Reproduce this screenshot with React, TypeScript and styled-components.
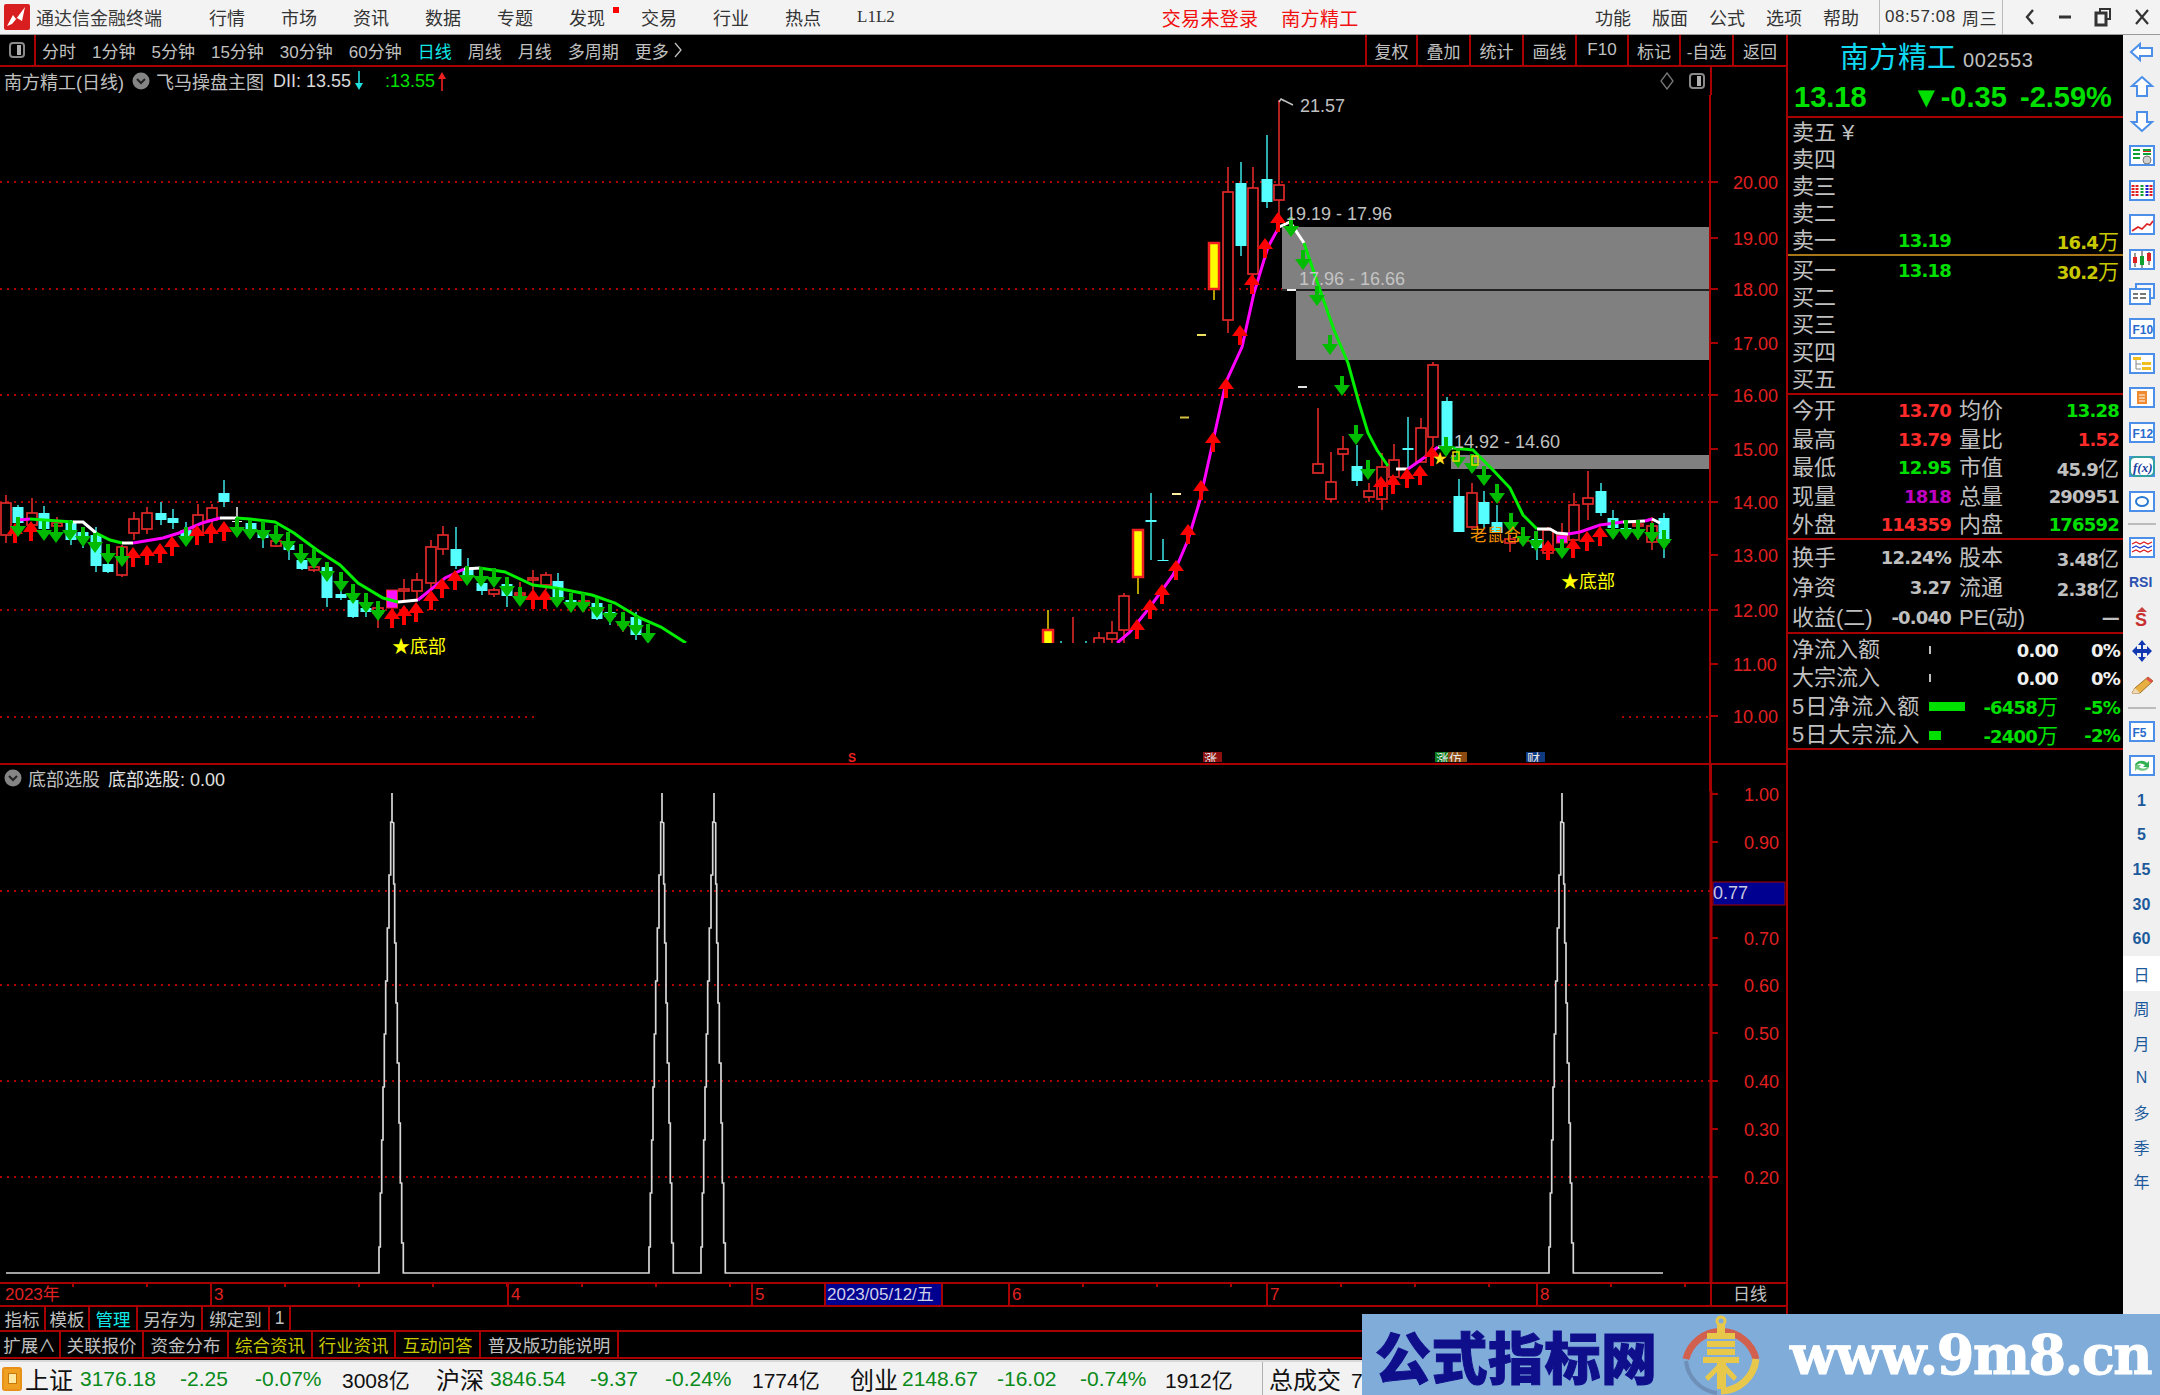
import React from "react";
import styled, { createGlobalStyle } from "styled-components";

const GlobalStyle = createGlobalStyle`
  html, body { margin: 0; padding: 0; background: #000; }
  * { box-sizing: border-box; }
`;

const FONT = `"Liberation Sans", "Noto Sans CJK SC", sans-serif`;
const RED = "#a80000";
const GRAY = "#c0c0c0";
const GREEN = "#00e000";
const TXTRED = "#ff2a2a";

const Page = styled.div`
  position: relative;
  width: 2160px;
  height: 1395px;
  overflow: hidden;
  background: #000;
  font-family: ${FONT};
  display: flex;
  flex-direction: column;
`;

/* title bar */
const TitleBar = styled.div`
  height: 35px;
  flex: none;
  display: flex;
  align-items: center;
  background: #f3f3f3;
  border-bottom: 1px solid #9a9a9a;
  color: #333;
  font-size: 18px;
`;
const AppName = styled.div`
  margin-left: 6px;
  margin-right: 47px;
  color: #3a3a3a;
`;
const MenuItem = styled.div`
  position: relative;
  width: 72px;
`;
const NewDot = styled.span`
  position: absolute;
  left: 44px;
  top: 3px;
  width: 6px;
  height: 6px;
  background: #f00;
`;
const SmallMenu = styled.div`
  font-family: "Liberation Serif", serif;
  font-size: 17px;
  margin-right: 267px;
`;
const Notice = styled.div`
  color: #f01010;
  font-size: 19px;
  letter-spacing: 0.3px;
  margin-right: 23px;
`;
const RightMenu = styled.div`
  margin-left: auto;
  display: flex;
  align-items: center;
  height: 100%;
`;
const RightItem = styled.div`
  width: 57px;
`;
const Clock = styled.div`
  width: 124px;
  height: 100%;
  margin-left: -1px;
  display: flex;
  align-items: center;
  justify-content: center;
  gap: 6px;
  border-left: 1px solid #bbb;
  border-right: 1px solid #bbb;
  font-size: 17px;
  letter-spacing: 0.6px;
`;
const WinButtons = styled.div`
  width: 157px;
  display: flex;
  align-items: center;
  gap: 22px;
  padding-left: 21px;
`;

/* body */
const Middle = styled.div`
  flex: none;
  height: 1325px;
  display: flex;
`;
const LeftColumn = styled.div`
  width: 1788px;
  flex: none;
  display: flex;
  flex-direction: column;
  border-right: 2px solid ${RED};
`;

const PeriodBar = styled.div`
  height: 32px;
  flex: none;
  display: flex;
  align-items: center;
  border-bottom: 2px solid ${RED};
  color: ${GRAY};
  font-size: 17px;
`;
const ToggleCell = styled.div`
  width: 36px;
  height: 100%;
  display: flex;
  align-items: center;
  justify-content: center;
  border-right: 2px solid ${RED};
  margin-right: 6px;
`;
const PeriodTab = styled.div<{ $on?: boolean }>`
  display: flex;
  align-items: center;
  gap: 5px;
  margin-right: 16px;
  white-space: nowrap;
  color: ${(p) => (p.$on ? "#10e8e8" : GRAY)};
`;
const BarTools = styled.div`
  margin-left: auto;
  display: flex;
  height: 100%;
`;
const BarTool = styled.div<{ $w: number }>`
  width: ${(p) => p.$w}px;
  display: flex;
  align-items: center;
  justify-content: center;
  border-left: 2px solid ${RED};
  font-size: 17px;
`;

const PaneHeader = styled.div<{ $h: number; $axis: number }>`
  height: ${(p) => p.$h}px;
  width: 1712px;
  flex: none;
  display: flex;
  align-items: center;
  padding-left: 4px;
  border-right: ${(p) => p.$axis}px solid ${RED};
  font-size: 18px;
  color: ${GRAY};
  white-space: nowrap;
`;
const HeadText = styled.span<{ $c?: string; $ml?: number }>`
  color: ${(p) => p.$c || GRAY};
  margin-left: ${(p) => p.$ml || 0}px;
`;
const HeadRight = styled.div`
  margin-left: auto;
  margin-right: 5px;
  display: flex;
  align-items: center;
  gap: 14px;
`;
const ChartSvg = styled.svg`
  display: block;
  flex: none;
  overflow: visible;
  font-family: ${FONT};
`;

const TimeAxis = styled.div`
  height: 25px;
  flex: none;
  display: flex;
  border-top: 2px solid ${RED};
  border-bottom: 2px solid ${RED};
  color: #e02020;
  font-size: 17px;
`;
const TimeCell = styled.div<{ $w: number; $date?: boolean; $end?: boolean }>`
  width: ${(p) => p.$w}px;
  flex: none;
  padding-left: ${(p) => (p.$date ? 1 : p.$w === 210 ? 5 : 2)}px;
  line-height: 21px;
  border-left: ${(p) => (p.$w === 210 ? "none" : `2px solid ${RED}`)};
  background: ${(p) =>
    p.$date
      ? "#000090"
      : p.$end
      ? "none"
      : `repeating-linear-gradient(90deg, transparent 0 72px, ${RED} 72px 74px) top / 100% 3px no-repeat`};
  color: ${(p) => (p.$date ? "#d0d0e8" : p.$end ? GRAY : "#e02020")};
  text-align: ${(p) => (p.$end ? "center" : "left")};
`;
const ToolRow = styled.div<{ $h: number }>`
  height: ${(p) => p.$h}px;
  flex: none;
  display: flex;
  border-bottom: 2px solid ${RED};
  font-size: 17.5px;
`;
const ToolCell = styled.div<{ $w: number; $c?: string }>`
  width: ${(p) => p.$w}px;
  flex: none;
  display: flex;
  align-items: center;
  justify-content: center;
  border-right: 2px solid ${RED};
  color: ${(p) => p.$c || GRAY};
  white-space: nowrap;
`;

/* quote panel */
const InfoPanel = styled.div`
  width: 335px;
  flex: none;
  background: #000;
  color: ${GRAY};
`;
const NameRow = styled.div`
  height: 43px;
  display: flex;
  align-items: flex-end;
  padding-left: 52px;
  padding-bottom: 2px;
`;
const StockName = styled.div`
  color: #10d8f0;
  font-size: 29px;
  line-height: 36px;
`;
const StockCode = styled.div`
  margin-left: 7px;
  font-size: 20px;
  line-height: 32px;
  letter-spacing: 0.6px;
`;
const PriceRow = styled.div`
  height: 40px;
  display: flex;
  align-items: center;
  padding-left: 6px;
  border-bottom: 2px solid ${RED};
  color: ${GREEN};
  font-size: 29px;
  font-weight: bold;
`;
const PriceCell = styled.div<{ $w: number }>`
  width: ${(p) => p.$w}px;
  white-space: nowrap;
`;
const Section = styled.div<{ $line?: string; $pt?: number }>`
  padding-top: ${(p) => p.$pt || 0}px;
  border-bottom: 2px solid ${(p) => p.$line || RED};
`;
const Row = styled.div<{ $h: number }>`
  height: ${(p) => p.$h}px;
  display: grid;
  grid-template-columns: 159px 8px 160px;
  align-items: center;
  padding-left: 4px;
  padding-top: 2px;
  font-size: 22px;
  line-height: 1;
  white-space: nowrap;
`;
const Pair = styled.div`
  display: flex;
  justify-content: space-between;
  align-items: center;
`;
const Num = styled.span<{ $c?: string }>`
  font-family: "DejaVu Sans", sans-serif;
  font-weight: bold;
  font-size: 18px;
  letter-spacing: -0.8px;
  color: ${(p) => p.$c || GRAY};
`;
const Unit = styled.span`
  font-family: "Noto Sans CJK SC", sans-serif;
  font-weight: normal;
  font-size: 21px;
  letter-spacing: 0;
`;
const FlowRow = styled.div`
  height: 28.5px;
  display: grid;
  grid-template-columns: 137px 50px 79px 62px;
  align-items: center;
  padding-left: 4px;
  padding-top: 2px;
  font-size: 22px;
  line-height: 1;
  white-space: nowrap;
`;
const FlowLabel = styled.span<{ $wide?: boolean }>`
  letter-spacing: ${(p) => (p.$wide ? 1 : 0)}px;
`;
const FlowBar = styled.div<{ $w: number }>`
  height: ${(p) => (p.$w > 2 ? 9 : 8)}px;
  width: ${(p) => p.$w}px;
  background: ${(p) => (p.$w > 2 ? GREEN : "#c0c0c0")};
`;
const RightText = styled.div`
  text-align: right;
`;

/* right tool strip */
const SideBar = styled.div`
  width: 37px;
  flex: none;
  height: 1360px;
  margin-bottom: -35px;
  background: #f0f0f0;
  display: flex;
  flex-direction: column;
  align-items: center;
  z-index: 1;
`;
const SideItem = styled.div<{ $on?: boolean }>`
  flex: none;
  width: 100%;
  height: 34.6px;
  display: flex;
  align-items: center;
  justify-content: center;
  background: ${(p) => (p.$on ? "#fff" : "none")};
  color: #1c5a9c;
  font-size: 16px;
  font-weight: bold;
`;
const SideCjk = styled(SideItem)`
  font-weight: normal;
`;
const SideSep = styled.div`
  flex: none;
  width: 28px;
  height: 2px;
  margin: 4px 0 5px;
  background: #bcbcbc;
`;

/* status bar */
const StatusBar = styled.div`
  height: 35px;
  flex: none;
  display: flex;
  align-items: center;
  background: #f2f2f2;
  border-top: 2px solid #d8d8d8;
  font-size: 21px;
  color: #222;
  white-space: nowrap;
`;
const StatusIcon = styled.div`
  width: 20px;
  height: 24px;
  margin: 0 3px 0 2px;
  border-radius: 3px;
  background: #f0a020;
  border: 2px solid #e89018;
  display: flex;
  align-items: center;
  justify-content: center;
`;
const StatusIconInner = styled.div`
  width: 9px;
  height: 11px;
  background: #ffe9a0;
  border: 1px solid #c87808;
`;
const StatusItem = styled.span<{ $w: number; $c?: string; $big?: boolean }>`
  display: inline-block;
  width: ${(p) => p.$w}px;
  flex: none;
  color: ${(p) => p.$c || "#111"};
  font-size: ${(p) => (p.$big ? 24 : 21)}px;
`;
const StatusSep = styled.div`
  width: 1px;
  height: 100%;
  margin: 0 6px 0 0;
  background: #b0b0b0;
`;

/* site banner over the bottom right corner */
const Watermark = styled.div`
  position: absolute;
  left: 1362px;
  top: 1314px;
  width: 798px;
  height: 81px;
  z-index: 3;
  background: #80acd9;
  display: flex;
  align-items: center;
`;
const MarkTitle = styled.div`
  flex: none;
  margin-left: 13px;
  width: 300px;
  color: #0f0f8c;
  font-family: "Noto Sans CJK SC", sans-serif;
  font-weight: 900;
  font-size: 56px;
  letter-spacing: 0.5px;
  -webkit-text-stroke: 1px #0f0f8c;
  white-space: nowrap;
`;
const MarkSite = styled.div`
  flex: none;
  margin-left: 29px;
  color: #fff;
  font-family: "DejaVu Serif", serif;
  font-weight: bold;
  font-size: 54px;
  letter-spacing: -1.5px;
  white-space: nowrap;
  -webkit-text-stroke: 1px #fff;
`;

/* --------- chart data, in page pixels --------- */

type Candle = [number, number, number, number, number, string];

const candles: Candle[] = [
  [6, 495, 503, 535, 543, "r"], [18, 505, 507, 523, 530, "c"], [32, 498, 513, 525, 535, "r"],
  [44, 506, 513, 529, 535, "c"], [57, 517, 523, 526, 533, "r"], [71, 520, 523, 540, 545, "c"],
  [83, 528, 532, 536, 548, "c"], [96, 527, 535, 566, 572, "c"], [108, 550, 564, 572, 573, "c"],
  [122, 545, 547, 575, 577, "r"], [134, 512, 519, 533, 540, "r"], [147, 507, 513, 529, 534, "r"],
  [161, 502, 513, 520, 525, "c"], [173, 509, 518, 523, 529, "c"], [186, 522, 530, 538, 545, "c"],
  [198, 504, 515, 535, 544, "r"], [212, 504, 508, 520, 528, "r"], [224, 480, 493, 502, 507, "c"],
  [237, 507, 521, 522, 523, "w"], [251, 520, 523, 532, 538, "c"], [263, 530, 532, 538, 548, "c"],
  [276, 538, 541, 546, 547, "r"], [289, 540, 545, 550, 560, "c"], [302, 555, 560, 569, 570, "c"],
  [314, 560, 567, 570, 572, "r"], [327, 565, 567, 598, 607, "c"], [341, 585, 594, 598, 600, "c"],
  [353, 595, 600, 617, 618, "c"], [366, 600, 608, 612, 617, "c"], [378, 605, 608, 613, 628, "r"],
  [392, 590, 590, 608, 608, "m"], [404, 579, 589, 591, 600, "r"], [417, 573, 580, 591, 600, "r"],
  [431, 540, 547, 583, 590, "r"], [443, 526, 535, 549, 555, "r"], [456, 527, 549, 566, 569, "c"],
  [468, 558, 569, 577, 583, "c"], [482, 575, 583, 591, 595, "c"], [494, 588, 590, 594, 597, "r"],
  [507, 580, 584, 596, 607, "c"], [520, 582, 593, 595, 605, "r"], [533, 570, 578, 580, 590, "r"],
  [546, 572, 575, 585, 590, "r"], [558, 573, 581, 600, 605, "c"], [571, 596, 600, 604, 612, "c"],
  [584, 598, 601, 605, 612, "r"], [597, 600, 603, 619, 620, "c"], [610, 608, 612, 617, 625, "c"],
  [623, 615, 622, 625, 632, "r"], [636, 612, 617, 635, 640, "c"],
  [1048, 610, 630, 650, 650, "y"], [1061, 641, 650, 650, 650, "c"], [1073, 617, 650, 650, 650, "r"],
  [1086, 641, 650, 650, 650, "c"], [1099, 632, 638, 650, 650, "r"],
  [1112, 621, 633, 639, 650, "r"], [1124, 593, 596, 630, 650, "r"], [1138, 530, 530, 577, 594, "y"],
  [1151, 493, 520, 522, 560, "c"], [1163, 539, 560, 561, 561, "c"], [1214, 243, 243, 289, 300, "y"],
  [1228, 167, 192, 320, 333, "r"], [1241, 162, 183, 246, 256, "c"], [1253, 167, 188, 274, 290, "r"],
  [1267, 135, 179, 202, 208, "c"], [1279, 100, 185, 200, 228, "r"], [1318, 408, 464, 473, 473, "r"],
  [1331, 452, 482, 499, 502, "r"], [1343, 436, 449, 454, 471, "r"], [1357, 445, 466, 481, 486, "c"],
  [1369, 483, 491, 497, 502, "r"], [1382, 453, 467, 499, 510, "r"], [1394, 444, 460, 477, 477, "r"],
  [1408, 417, 448, 450, 468, "c"], [1421, 418, 428, 462, 462, "r"], [1433, 362, 365, 437, 447, "r"],
  [1447, 397, 401, 447, 455, "c"], [1459, 479, 496, 532, 532, "c"], [1472, 483, 493, 527, 530, "r"],
  [1484, 491, 502, 524, 528, "c"], [1497, 505, 522, 533, 533, "c"], [1510, 535, 539, 543, 552, "r"],
  [1523, 527, 540, 541, 545, "r"], [1537, 535, 539, 548, 560, "c"], [1548, 527, 530, 553, 557, "r"],
  [1562, 523, 535, 543, 545, "m"], [1574, 493, 505, 540, 555, "r"], [1588, 471, 498, 504, 520, "r"],
  [1601, 483, 491, 513, 516, "c"], [1613, 510, 518, 528, 530, "c"], [1626, 525, 528, 532, 535, "c"],
  [1638, 521, 524, 526, 540, "r"], [1652, 517, 526, 542, 550, "r"], [1664, 513, 518, 543, 558, "c"],
];

const upArrows = [
  [15, 523], [31, 521], [133, 547], [147, 545], [160, 543], [172, 536], [197, 525], [211, 523], [224, 521],
  [392, 608], [404, 605], [416, 602], [431, 590], [442, 578], [455, 570], [533, 589], [545, 589],
  [1137, 619], [1150, 599], [1162, 584], [1176, 560], [1188, 524], [1201, 480], [1213, 432], [1226, 378],
  [1240, 325], [1252, 274], [1265, 238], [1278, 212], [1381, 476], [1393, 474], [1407, 468], [1420, 465],
  [1432, 446], [1548, 540], [1573, 538], [1587, 531], [1600, 526],
];

const downArrows = [
  [18, 537], [44, 541], [56, 543], [70, 541], [83, 547], [95, 553], [108, 564], [122, 567], [186, 547],
  [237, 538], [250, 540], [263, 541], [276, 545], [288, 552], [301, 564], [314, 569], [327, 582], [341, 592],
  [353, 604], [366, 613], [378, 621], [467, 586], [481, 587], [494, 588], [507, 597], [520, 607], [557, 608],
  [571, 613], [583, 613], [597, 618], [610, 624], [623, 632], [636, 636], [648, 644],
  [1291, 237], [1303, 270], [1317, 306], [1330, 355], [1342, 396], [1356, 445], [1368, 480], [1446, 457],
  [1458, 468], [1472, 474], [1484, 486], [1497, 504], [1511, 533], [1523, 547], [1536, 551], [1562, 559],
  [1613, 540], [1626, 540], [1638, 540], [1652, 543], [1664, 550],
];

const MAG = "#ff00ff";
const LGREEN = "#00ee00";
const WHITE = "#ffffff";

const trendLine: [string, number[][]][] = [
  [MAG, [[18, 520], [30, 519]]],
  [LGREEN, [[30, 519], [73, 522]]],
  [WHITE, [[73, 522], [83, 522], [96, 533]]],
  [LGREEN, [[96, 533], [110, 540], [122, 543]]],
  [WHITE, [[122, 543], [133, 543]]],
  [MAG, [[133, 543], [163, 538], [179, 533], [202, 523], [220, 518]]],
  [WHITE, [[220, 518], [236, 518]]],
  [LGREEN, [[236, 518], [250, 519], [275, 522], [294, 533], [317, 550], [340, 565], [358, 583], [383, 598], [398, 602]]],
  [WHITE, [[398, 602], [418, 600]]],
  [MAG, [[418, 600], [445, 578], [464, 569]]],
  [WHITE, [[464, 569], [480, 568]]],
  [LGREEN, [[480, 568], [505, 572], [533, 585], [556, 588], [592, 595], [615, 603], [640, 618], [661, 627], [686, 643]]],
  [MAG, [[1117, 643], [1130, 632], [1150, 607], [1173, 575], [1188, 540], [1200, 500], [1210, 455], [1226, 382], [1242, 347], [1254, 293], [1268, 247], [1279, 227]]],
  [WHITE, [[1279, 227], [1290, 222], [1304, 243]]],
  [LGREEN, [[1304, 243], [1320, 290], [1334, 330], [1348, 363], [1359, 403], [1368, 433], [1377, 450], [1388, 466]]],
  [WHITE, [[1396, 469], [1408, 469]]],
  [MAG, [[1408, 469], [1425, 457], [1438, 447]]],
  [WHITE, [[1438, 447], [1453, 448]]],
  [LGREEN, [[1453, 448], [1473, 450], [1480, 457], [1493, 470], [1510, 488], [1523, 515], [1537, 529]]],
  [WHITE, [[1537, 529], [1550, 529], [1557, 533], [1568, 534]]],
  [MAG, [[1568, 534], [1580, 532], [1600, 525], [1623, 522]]],
  [WHITE, [[1623, 522], [1645, 521]]],
  [MAG, [[1645, 521], [1652, 519]]],
  [WHITE, [[1652, 519], [1660, 523]]],
];

const priceAxis = [
  ["20.00", 182], ["19.00", 238], ["18.00", 289], ["17.00", 343], ["16.00", 395], ["15.00", 449],
  ["14.00", 502], ["13.00", 555], ["12.00", 610], ["11.00", 664], ["10.00", 716],
] as [string, number][];

const lowerAxis = [
  ["1.00", 794], ["0.90", 842], ["0.70", 938], ["0.60", 985], ["0.50", 1033], ["0.40", 1081], ["0.30", 1129], ["0.20", 1177],
] as [string, number][];

const spikes = [392, 662, 714, 1562];

const pts = (list: number[][]) => list.map((p) => p.join(",")).join(" ");

function CandleMark({ c }: { c: Candle }) {
  const [x, hi, top, bot, lo, kind] = c;
  const wick = kind === "c" ? "#38d8d8" : kind === "w" ? "#e8e8e8" : kind === "y" ? "#e0c800" : "#e02828";
  const h = Math.max(bot - top, 1);
  return (
    <g>
      <line x1={x} x2={x} y1={hi} y2={lo} stroke={wick} strokeWidth={1.6} />
      {kind === "r" && <rect x={x - 5} y={top} width={10} height={h} fill="#000" stroke="#e02828" strokeWidth={1.7} />}
      {kind === "c" && <rect x={x - 5.5} y={top} width={11} height={h} fill="#55ffff" />}
      {kind === "w" && <rect x={x - 5} y={top} width={10} height={h} fill="#f0f0f0" />}
      {kind === "m" && <rect x={x - 5.5} y={top} width={11} height={h} fill="#ff10ff" stroke="#e02828" strokeWidth={1} />}
      {kind === "y" && <rect x={x - 5} y={top} width={10} height={h} fill="#ffff00" stroke="#f02020" strokeWidth={2.5} />}
    </g>
  );
}

function UpArrow({ x, y }: { x: number; y: number }) {
  return <path d={`M${x} ${y}l8 11h-6v9h-4v-9h-6z`} fill="#ff0000" />;
}
function DownArrow({ x, y }: { x: number; y: number }) {
  return <path d={`M${x} ${y}l-8 -11h6v-9h4v9h6z`} fill="#00bb00" />;
}

function SmallTag({ x, w, bg, text }: { x: number; w: number; bg: string; text: string }) {
  return (
    <g>
      <rect x={x} y={752} width={w} height={10} fill={bg} />
      <text x={x + 1} y={763} fontSize={13} fill="#e8e8e8" clipPath="url(#tagClip)">{text}</text>
    </g>
  );
}

function MainChart() {
  return (
    <ChartSvg width={1786} height={670} viewBox="0 95 1786 670">
      <defs>
        <clipPath id="tagClip"><rect x="0" y="752" width="1700" height="10" /></clipPath>
      </defs>
      {[182, 289, 395, 502, 610].map((y) => (
        <line key={y} x1={0} x2={1710} y1={y} y2={y} stroke="#b00000" strokeWidth={2} strokeDasharray="2 5" />
      ))}
      <line x1={0} x2={537} y1={717} y2={717} stroke="#b00000" strokeWidth={2} strokeDasharray="2 5" />
      <line x1={1622} x2={1710} y1={717} y2={717} stroke="#b00000" strokeWidth={2} strokeDasharray="2 5" />

      <rect x={1282} y={227} width={428} height={62} fill="#808080" />
      <rect x={1296} y={291} width={414} height={69} fill="#808080" />
      <rect x={1451} y={455} width={259} height={14} fill="#808080" />
      <line x1={1282} x2={1710} y1={290} y2={290} stroke="#222" strokeWidth={2} />

      {candles.map((c, i) => <CandleMark key={i} c={c} />)}

      <rect x={1180} y={416.5} width={9} height={2} fill="#d8c040" />
      <rect x={1172} y={493} width={9} height={2} fill="#fff0a0" />
      <rect x={1197} y={334} width={9} height={2} fill="#f0e060" />
      <rect x={1298} y={386} width={9} height={2} fill="#e0e0e0" />
      <rect x={1287} y={289} width={9} height={2} fill="#f0f0f0" />

      {trendLine.map(([color, line], i) => (
        <polyline key={i} points={pts(line)} fill="none" stroke={color} strokeWidth={3} />
      ))}

      {upArrows.map(([x, y], i) => <UpArrow key={i} x={x} y={y} />)}
      {downArrows.map(([x, y], i) => <DownArrow key={i} x={x} y={y} />)}

      {/* faded part of the picture, nothing shows through below this line */}
      <rect x={640} y={643} width={485} height={105} fill="#000" />

      <text x={1300} y={112} fontSize={18} fill={GRAY}>21.57</text>
      <path d="M1279 102l2 -3 3 2M1281 99l12 6" fill="none" stroke={GRAY} strokeWidth={1.4} />
      <text x={1286} y={220} fontSize={18} fill={GRAY}>19.19 - 17.96</text>
      <text x={1299} y={285} fontSize={18} fill="#c4c4c4">17.96 - 16.66</text>
      <text x={1454} y={448} fontSize={18} fill={GRAY}>14.92 - 14.60</text>

      <text x={392} y={653} fontSize={18} fill="#ffff00">★底部</text>
      <text x={1561} y={588} fontSize={18} fill="#ffff00">★底部</text>
      <text x={1470} y={541} fontSize={17} fill="#f09000">老鼠仓</text>
      <text x={1433} y={463} fontSize={14} fill="#ffe020">★</text>
      <rect x={1453} y={452} width={6} height={9} fill="none" stroke="#e8d800" strokeWidth={1.5} />
      <rect x={1472} y={456} width={6} height={9} fill="none" stroke="#e8d800" strokeWidth={1.5} />

      <text x={848} y={762} fontSize={12} fontWeight="bold" fill="#f02020">S</text>
      <SmallTag x={1203} w={19} bg="#8c1010" text="涨" />
      <SmallTag x={1435} w={13} bg="#0a7a1a" text="涨" />
      <SmallTag x={1448} w={19} bg="#8a4a10" text="仿" />
      <SmallTag x={1526} w={19} bg="#103a80" text="财" />

      <line x1={0} x2={1786} y1={764} y2={764} stroke={RED} strokeWidth={2} />
      <line x1={1710} x2={1710} y1={95} y2={764} stroke={RED} strokeWidth={2} />
      {priceAxis.map(([label, y]) => (
        <g key={label}>
          <line x1={1710} x2={1718} y1={y} y2={y} stroke={RED} strokeWidth={2} />
          <text x={1733} y={y + 7} fontSize={18} fill="#e02020">{label}</text>
        </g>
      ))}
    </ChartSvg>
  );
}

/* stair stepped peak as the low resolution indicator draws it */
const stepLeft = [[-13, 1273], [-13, 1247], [-11.7, 1247], [-11.7, 1193], [-10.3, 1193], [-10.3, 1140], [-9, 1140], [-9, 1087], [-7.7, 1087], [-7.7, 1034], [-6.3, 1034], [-6.3, 981], [-4.7, 981], [-4.7, 928], [-3, 928], [-3, 875], [-1.3, 875], [-1.3, 822], [0, 822], [0, 793]];
const stepRight = [[0, 793], [0, 822], [1.7, 823], [1.7, 884], [2.7, 884], [2.7, 943], [4, 943], [4, 1003], [5.3, 1003], [5.3, 1063], [7, 1063], [7, 1123], [8.3, 1123], [8.3, 1183], [9.7, 1183], [9.7, 1243], [11.3, 1243], [11.3, 1273]];

function LowerChart() {
  const line: number[][] = [[6, 1273]];
  spikes.forEach((cx) => {
    stepLeft.forEach(([dx, y]) => line.push([cx + dx, y]));
    stepRight.forEach(([dx, y]) => line.push([cx + dx, y]));
  });
  line.push([1663, 1273]);
  return (
    <ChartSvg width={1786} height={491} viewBox="0 791 1786 491">
      {[891, 985, 1081, 1177].map((y) => (
        <line key={y} x1={0} x2={1710} y1={y} y2={y} stroke="#b00000" strokeWidth={2} strokeDasharray="2 5" />
      ))}
      <polyline points={pts(line)} fill="none" stroke="#d8d8d8" strokeWidth={1.7} />
      <line x1={1711} x2={1711} y1={791} y2={1282} stroke={RED} strokeWidth={3} />
      {lowerAxis.map(([label, y]) => (
        <g key={label}>
          <line x1={1712} x2={1718} y1={y} y2={y} stroke={RED} strokeWidth={2} />
          <text x={1744} y={y + 7} fontSize={18} fill="#e02020">{label}</text>
        </g>
      ))}
      <rect x={1713} y={882} width={72} height={23} fill="#000090" stroke={RED} strokeWidth={1} />
      <text x={1713} y={899} fontSize={18} fill="#c8c8e0">0.77</text>
    </ChartSvg>
  );
}

function Chevron() {
  return (
    <svg width="18" height="18" viewBox="0 0 18 18">
      <circle cx="9" cy="9" r="8.5" fill="#858585" />
      <path d="M5 7l4 4 4-4" fill="none" stroke="#222" strokeWidth="2" />
    </svg>
  );
}
function PaneToggle() {
  return (
    <svg width="16" height="16" viewBox="0 0 16 16">
      <rect x="1" y="1" width="14" height="14" rx="3" fill="none" stroke="#8a8a8a" strokeWidth="2" />
      <rect x="8" y="3" width="4" height="10" fill="#b0b0b0" />
    </svg>
  );
}

function AppLogo() {
  return (
    <svg width="26" height="26" viewBox="0 0 26 26" style={{ marginLeft: 4 }}>
      <rect width="26" height="26" rx="2" fill="#d81e1e" />
      <path d="M3 22L9 11l3 4 9-12-3 14-5-3-5 6z" fill="#fff" />
    </svg>
  );
}

/* sidebar icons */
const B = "#4b8fe8";
const Frame = ({ children }: { children?: React.ReactNode }) => (
  <svg width="26" height="22" viewBox="0 0 26 22">
    <rect x="1" y="1" width="24" height="19" fill="#fff" stroke={B} strokeWidth="2" />
    {children}
  </svg>
);
const Bare = ({ children }: { children?: React.ReactNode }) => (
  <svg width="28" height="24" viewBox="0 0 28 24">{children}</svg>
);
const LabelFrame = ({ t }: { t: string }) => (
  <Frame><text x="3.5" y="15.5" fontSize="12" fontFamily="Liberation Sans" fill="#2a6ccc">{t}</text></Frame>
);

const sideIcons: React.ReactNode[] = [
  <Bare><path d="M3 12l9-8v4h12v8H12v4z" fill="#fff" stroke={B} strokeWidth="2" /></Bare>,
  <Bare><path d="M14 2l10 9h-5v10H9V11H4z" fill="#fff" stroke={B} strokeWidth="2" /></Bare>,
  <Bare><path d="M14 22L4 13h5V3h10v10h5z" fill="#fff" stroke={B} strokeWidth="2" /></Bare>,
  <Frame>
    <path d="M4 5h7M4 9h7M4 13h7M14 5h8M14 9h8" stroke="#10a030" strokeWidth="2" />
    <path d="M14 6.5h8" stroke="#e02020" strokeWidth="1" />
    <circle cx="18" cy="15" r="4" fill="#d0d0d0" stroke="#777" />
  </Frame>,
  <Frame>
    <path d="M4 5v12M8 5v12" stroke="#e02020" strokeWidth="3" strokeDasharray="2 1" />
    <path d="M13 5v12" stroke="#10a030" strokeWidth="3" strokeDasharray="2 1" />
    <path d="M18 5v12" stroke="#2020d0" strokeWidth="3" strokeDasharray="2 1" />
    <path d="M22 5v12" stroke="#e02020" strokeWidth="3" strokeDasharray="2 1" />
  </Frame>,
  <Frame><path d="M3 17l6-4 4 2 5-5 3 1 3-4" fill="none" stroke="#e02020" strokeWidth="1.7" /></Frame>,
  <Frame>
    <path d="M6 4v14M13 2v17M20 3v13" stroke="#333" />
    <rect x="4" y="8" width="4" height="6" fill="#e02020" />
    <rect x="11" y="7" width="4" height="9" fill="#10a030" />
    <rect x="18" y="4" width="4" height="8" fill="#e02020" />
  </Frame>,
  <Bare>
    <rect x="8" y="2" width="18" height="14" fill="#f8f8f8" stroke={B} strokeWidth="2" />
    <rect x="2" y="7" width="20" height="15" fill="#fff" stroke={B} strokeWidth="2" />
    <path d="M5 12h5M12 12h6M5 16h5M12 16h6" stroke="#777" strokeWidth="2" />
  </Bare>,
  <LabelFrame t="F10" />,
  <Frame>
    <rect x="4" y="4" width="8" height="3" fill="#f0c020" />
    <path d="M7 7v9h5M7 11h5" stroke="#888" fill="none" />
    <rect x="13" y="9" width="9" height="3" fill="#f0c020" />
    <rect x="13" y="14" width="9" height="3" fill="#f0c020" />
  </Frame>,
  <Frame><path d="M8 4h10v13H8z" fill="#f08a30" /><path d="M10 8h6M10 11h6M10 14h6" stroke="#fff" /></Frame>,
  <LabelFrame t="F12" />,
  <Frame>
    <rect x="1" y="1" width="24" height="19" rx="5" fill="#fff" stroke="#30a0a0" strokeWidth="2" />
    <text x="4" y="16" fontSize="13" fontStyle="italic" fontFamily="Liberation Serif" fill="#1a3fa0">f(x)</text>
  </Frame>,
  <Frame><ellipse cx="13" cy="10.5" rx="6" ry="4.5" fill="none" stroke="#2a7ad0" strokeWidth="2" /></Frame>,
  null,
  <Frame>
    <path d="M3 7l4-2 4 2 4-2 4 2 4-2" fill="none" stroke="#e02020" strokeWidth="1.3" />
    <path d="M3 11l4-2 4 2 4-2 4 2 4-2" fill="none" stroke="#2040d0" strokeWidth="1.3" />
    <path d="M3 15l4-2 4 2 4-2 4 2 4-2" fill="none" stroke="#e02020" strokeWidth="1.3" />
  </Frame>,
  <Bare><text x="1" y="17" fontSize="14" fontWeight="bold" fontFamily="Liberation Sans" fill="#2b50b0">RSI</text></Bare>,
  <Bare>
    <path d="M14 2l5 5H9z" fill="#c84040" />
    <text x="7" y="21" fontSize="18" fontWeight="bold" fontFamily="Liberation Sans" fill="#c83030">S</text>
  </Bare>,
  <Bare>
    <path d="M14 1l4 5h-3v4h4V7l5 5-5 5v-3h-4v4h3l-4 5-4-5h3v-4H9v3l-5-5 5-5v3h4V6h-3z" fill="#1038b0" />
  </Bare>,
  <Bare>
    <path d="M4 19l3-5L20 3l5 4-13 12z" fill="#e8b040" stroke="#a07020" />
    <path d="M20 3l5 4-2 2-5-4z" fill="#e05050" />
    <path d="M4 19l3-5 5 5z" fill="#f0d8b0" />
  </Bare>,
  null,
  <LabelFrame t="F5" />,
  <Frame>
    <path d="M6 10c1-4 8-6 12-2l2-2v6h-6l2-2c-3-2-6-2-8 0z" fill="#30b050" />
    <path d="M20 12c-1 4-8 5-12 2l-2 2v-6h6l-2 2c3 2 6 2 8 0z" fill="#70c880" />
  </Frame>,
];

function WatermarkLogo() {
  return (
    <svg width="80" height="80" viewBox="0 0 80 80" style={{ marginLeft: 6, flex: "none" }}>
      <path d="M5 44A36 36 0 0 1 75 44" fill="none" stroke="#d2604f" strokeWidth="7" />
      <path d="M75 44A36 36 0 0 1 40 76" fill="none" stroke="#e8c84a" strokeWidth="7" />
      <path d="M5 46A36 36 0 0 0 36 78" fill="none" stroke="#6e8fb8" strokeWidth="4" />
      <circle cx="40" cy="6" r="4" fill="none" stroke="#e8c84a" strokeWidth="3" />
      <rect x="36" y="10" width="8" height="8" fill="#e8c84a" />
      <rect x="26" y="18" width="28" height="22" fill="#e8c84a" />
      <rect x="26" y="24" width="28" height="2" fill="#80acd9" />
      <rect x="26" y="32" width="28" height="2" fill="#80acd9" />
      <rect x="22" y="42" width="36" height="6" fill="#e8c84a" />
      <rect x="36" y="48" width="9" height="26" fill="#e8c84a" />
      <path d="M36 50L24 62l3 4 9-9zM45 50l11 12-3 4-8-8z" fill="#e8c84a" />
    </svg>
  );
}

const periods = ["分时", "1分钟", "5分钟", "15分钟", "30分钟", "60分钟", "日线", "周线", "月线", "多周期"];
const barTools: [string, number][] = [["复权", 51], ["叠加", 53], ["统计", 53], ["画线", 53], ["F10", 52], ["标记", 52], ["-自选", 53], ["返回", 54]];
const menus = ["行情", "市场", "资讯", "数据", "专题", "发现", "交易", "行业", "热点"];
const rightMenus = ["功能", "版面", "公式", "选项", "帮助"];

const timeCells: [string, number][] = [["2023年", 210], ["3", 297], ["4", 244], ["5", 73]];
const timeCells2: [string, number][] = [["", 67], ["6", 258], ["7", 270], ["8", 174]];

const tools1: [string, number, string?][] = [["指标", 46], ["模板", 44], ["管理", 48, "#10e8e8"], ["另存为", 65], ["绑定到", 67], ["1", 21]];
const yl = "#c8c800";
const tools2: [string, number, string?][] = [["扩展∧", 61], ["关联报价", 83], ["资金分布", 85], ["综合资讯", 84, yl], ["行业资讯", 83, yl], ["互动问答", 85, yl], ["普及版功能说明", 138]];

const YEL = "#c8c800";
const sells = [["卖五 ¥"], ["卖四"], ["卖三"], ["卖二"], ["卖一", "13.19", "16.4"]];
const buys = [["买一", "13.18", "30.2"], ["买二"], ["买三"], ["买四"], ["买五"]];

type Cell = [string, string, string?, string?];
const stats: [Cell, Cell][] = [
  [["今开", "13.70", TXTRED], ["均价", "13.28", GREEN]],
  [["最高", "13.79", TXTRED], ["量比", "1.52", TXTRED]],
  [["最低", "12.95", GREEN], ["市值", "45.9", GRAY, "亿"]],
  [["现量", "1818", "#c000c0"], ["总量", "290951 ", GRAY]],
  [["外盘", "114359", TXTRED], ["内盘", "176592", GREEN]],
];
const stats2: [Cell, Cell][] = [
  [["换手", "12.24%", GRAY], ["股本", "3.48", GRAY, "亿"]],
  [["净资", "3.27", GRAY], ["流通", "2.38", GRAY, "亿"]],
  [["收益(二)", "-0.040", GRAY], ["PE(动)", "—  ", GRAY]],
];
const flows: [string, number, string, string, string?][] = [
  ["净流入额", 2, "0.00", "0%"],
  ["大宗流入", 2, "0.00", "0%"],
  ["5日净流入额", 36, "-6458", "-5%", "万"],
  ["5日大宗流入", 12, "-2400", "-2%", "万"],
];

const StatCell = ({ cell }: { cell: Cell }) => (
  <Pair>
    <span>{cell[0]}</span>
    <Num $c={cell[2]}>
      {cell[1]}
      {cell[3] && <Unit>{cell[3]}</Unit>}
    </Num>
  </Pair>
);

function BookRow({ row, h }: { row: string[]; h: number }) {
  return (
    <Row $h={h}>
      <Pair>
        <span>{row[0]}</span>
        {row[1] && <Num $c={GREEN}>{row[1]}</Num>}
      </Pair>
      <span />
      <Pair>
        <span />
        {row[2] && <Num $c={YEL}>{row[2]}<Unit>万</Unit></Num>}
      </Pair>
    </Row>
  );
}

export default function App() {
  return (
    <Page>
      <GlobalStyle />
      <TitleBar>
        <AppLogo />
        <AppName>通达信金融终端</AppName>
        {menus.map((m) => (
          <MenuItem key={m}>
            {m}
            {m === "发现" && <NewDot />}
          </MenuItem>
        ))}
        <SmallMenu>L1L2</SmallMenu>
        <Notice>交易未登录</Notice>
        <Notice>南方精工</Notice>
        <RightMenu>
          {rightMenus.map((m) => <RightItem key={m}>{m}</RightItem>)}
          <Clock>
            <span>08:57:08</span>
            <span>周三</span>
          </Clock>
          <WinButtons>
            <svg width="12" height="20" viewBox="0 0 12 20"><path d="M9 3L3 10l6 7" fill="none" stroke="#333" strokeWidth="2.4" /></svg>
            <svg width="14" height="20" viewBox="0 0 14 20"><path d="M1 10h12" stroke="#333" strokeWidth="3" /></svg>
            <svg width="18" height="20" viewBox="0 0 18 20"><path d="M6 5V2h10v10h-3" fill="none" stroke="#333" strokeWidth="2" /><rect x="2" y="6" width="10" height="12" fill="none" stroke="#333" strokeWidth="3" /></svg>
            <svg width="16" height="20" viewBox="0 0 16 20"><path d="M2 3l12 14M14 3L2 17" stroke="#333" strokeWidth="2.2" /></svg>
          </WinButtons>
        </RightMenu>
      </TitleBar>

      <Middle>
        <LeftColumn>
          <PeriodBar>
            <ToggleCell><PaneToggle /></ToggleCell>
            {periods.map((p) => <PeriodTab key={p} $on={p === "日线"}>{p}</PeriodTab>)}
            <PeriodTab>
              更多
              <svg width="9" height="16" viewBox="0 0 9 16"><path d="M1 1l6 7-6 7" fill="none" stroke={GRAY} strokeWidth="1.3" /></svg>
            </PeriodTab>
            <BarTools>
              {barTools.map(([t, w]) => <BarTool key={t} $w={w}>{t}</BarTool>)}
            </BarTools>
          </PeriodBar>

          <PaneHeader $h={28} $axis={2}>
            <span>南方精工(日线)</span>
            <HeadText $ml={8} />
            <Chevron />
            <HeadText $ml={6}>飞马操盘主图</HeadText>
            <HeadText $ml={9} $c="#d8d8d8">DII: 13.55</HeadText>
            <svg width="12" height="22" viewBox="0 0 12 22" style={{ marginLeft: 2 }}><path d="M6 1v14" stroke="#20e0e0" strokeWidth="1.6" /><path d="M2 13h8l-4 7z" fill="#20e0e0" /></svg>
            <HeadText $ml={20} $c={GREEN}>:13.55</HeadText>
            <svg width="12" height="22" viewBox="0 0 12 22" style={{ marginLeft: 1 }}><path d="M6 21V7" stroke="#f02020" strokeWidth="1.6" /><path d="M2 9h8L6 2z" fill="#f02020" /></svg>
            <HeadRight>
              <svg width="16" height="18" viewBox="0 0 16 18"><path d="M8 1l6 8-6 8-6-8z" fill="none" stroke="#777" strokeWidth="1.3" /></svg>
              <PaneToggle />
            </HeadRight>
          </PaneHeader>
          <MainChart />

          <PaneHeader $h={26} $axis={3}>
            <Chevron />
            <HeadText $ml={6}>底部选股</HeadText>
            <HeadText $ml={8} $c="#e0e0e0">底部选股: 0.00</HeadText>
          </PaneHeader>
          <LowerChart />

          <TimeAxis>
            {timeCells.map(([t, w]) => <TimeCell key={t} $w={w}>{t}</TimeCell>)}
            <TimeCell $w={117} $date>2023/05/12/五</TimeCell>
            {timeCells2.map(([t, w]) => <TimeCell key={w} $w={w}>{t}</TimeCell>)}
            <TimeCell $w={76} $end>日线</TimeCell>
          </TimeAxis>
          <ToolRow $h={25}>
            {tools1.map(([t, w, c]) => <ToolCell key={t} $w={w} $c={c}>{t}</ToolCell>)}
          </ToolRow>
          <ToolRow $h={27}>
            {tools2.map(([t, w, c]) => <ToolCell key={t} $w={w} $c={c}>{t}</ToolCell>)}
          </ToolRow>
        </LeftColumn>

        <InfoPanel>
          <NameRow>
            <StockName>南方精工</StockName>
            <StockCode>002553</StockCode>
          </NameRow>
          <PriceRow>
            <PriceCell $w={118}>13.18</PriceCell>
            <PriceCell $w={108}>▼-0.35</PriceCell>
            <PriceCell $w={95}>-2.59%</PriceCell>
          </PriceRow>
          <Section $line="#a87818">
            {sells.map((r) => <BookRow key={r[0]} row={r} h={27.2} />)}
          </Section>
          <Section>
            {buys.map((r) => <BookRow key={r[0]} row={r} h={27.4} />)}
          </Section>
          <Section $pt={1}>
            {stats.map(([a, b]) => (
              <Row key={a[0]} $h={28.5}>
                <StatCell cell={a} />
                <span />
                <StatCell cell={b} />
              </Row>
            ))}
          </Section>
          <Section $pt={1}>
            {stats2.map(([a, b]) => (
              <Row key={a[0]} $h={30.3}>
                <StatCell cell={a} />
                <span />
                <StatCell cell={b} />
              </Row>
            ))}
          </Section>
          <Section>
            {flows.map(([label, bar, val, pct, unit]) => (
              <FlowRow key={label}>
                <FlowLabel $wide={label.startsWith("5")}>{label}</FlowLabel>
                <FlowBar $w={bar} />
                <RightText>
                  <Num $c={unit ? GREEN : "#f0f0f0"}>{val}{unit && <Unit>{unit}</Unit>}</Num>
                </RightText>
                <RightText>
                  <Num $c={unit ? GREEN : "#f0f0f0"}>{pct}</Num>
                </RightText>
              </FlowRow>
            ))}
          </Section>
        </InfoPanel>

        <SideBar>
          {sideIcons.map((icon, i) =>
            icon ? <SideItem key={i}>{icon}</SideItem> : <SideSep key={i} />
          )}
          {["1", "5", "15", "30", "60"].map((t) => <SideItem key={t}>{t}</SideItem>)}
          {["日", "周", "月", "N", "多", "季", "年"].map((t) => (
            <SideCjk key={t} $on={t === "日"}>{t}</SideCjk>
          ))}
        </SideBar>
      </Middle>

      <StatusBar>
        <StatusIcon><StatusIconInner /></StatusIcon>
        <StatusItem $w={55} $big>上证</StatusItem>
        <StatusItem $w={100} $c="#0a8a1a">3176.18</StatusItem>
        <StatusItem $w={75} $c="#0a8a1a">-2.25</StatusItem>
        <StatusItem $w={87} $c="#0a8a1a">-0.07%</StatusItem>
        <StatusItem $w={94}>3008亿</StatusItem>
        <StatusItem $w={54} $big>沪深</StatusItem>
        <StatusItem $w={100} $c="#0a8a1a">3846.54</StatusItem>
        <StatusItem $w={75} $c="#0a8a1a">-9.37</StatusItem>
        <StatusItem $w={87} $c="#0a8a1a">-0.24%</StatusItem>
        <StatusItem $w={98}>1774亿</StatusItem>
        <StatusItem $w={52} $big>创业</StatusItem>
        <StatusItem $w={95} $c="#0a8a1a">2148.67</StatusItem>
        <StatusItem $w={83} $c="#0a8a1a">-16.02</StatusItem>
        <StatusItem $w={85} $c="#0a8a1a">-0.74%</StatusItem>
        <StatusItem $w={97}>1912亿</StatusItem>
        <StatusSep />
        <StatusItem $w={82} $big>总成交</StatusItem>
        <StatusItem $w={100}>7000亿</StatusItem>
      </StatusBar>

      <Watermark>
        <MarkTitle>公式指标网</MarkTitle>
        <WatermarkLogo />
        <MarkSite>www.9m8.cn</MarkSite>
      </Watermark>
    </Page>
  );
}
